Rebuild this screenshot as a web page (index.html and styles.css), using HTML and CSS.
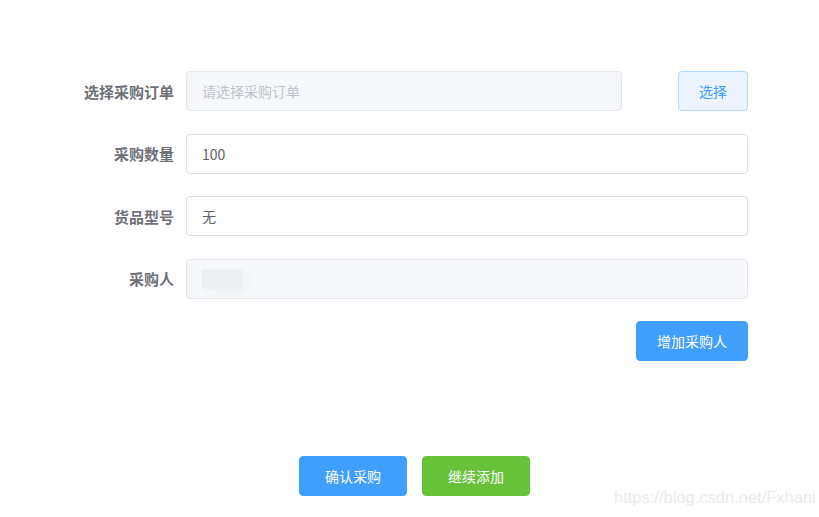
FILE: index.html
```html
<!DOCTYPE html>
<html lang="zh-CN">
<head>
    <meta charset="UTF-8">
    <title>采购</title>
    <link rel="stylesheet" href="styles.css">
</head>
<body>
    <div class="page">
        <form class="purchase-form">
            <div class="form-item">
                <label class="form-label">选择采购订单</label>
                <div class="form-content">
                    <input class="input input-short" type="text" placeholder="请选择采购订单" disabled>
                    <button type="button" class="btn btn-plain">选择</button>
                </div>
            </div>
            <div class="form-item">
                <label class="form-label">采购数量</label>
                <div class="form-content">
                    <input class="input" type="text" value="100">
                </div>
            </div>
            <div class="form-item">
                <label class="form-label">货品型号</label>
                <div class="form-content">
                    <input class="input" type="text" value="无">
                </div>
            </div>
            <div class="form-item">
                <label class="form-label">采购人</label>
                <div class="form-content">
                    <div class="input input-disabled">
                        <span class="blurred-name"></span>
                    </div>
                </div>
            </div>
            <div class="form-item">
                <div class="form-content align-right">
                    <button type="button" class="btn btn-primary btn-wide">增加采购人</button>
                </div>
            </div>
        </form>

        <div class="footer-actions">
            <button type="button" class="btn btn-primary">确认采购</button>
            <button type="button" class="btn btn-success">继续添加</button>
        </div>
    </div>

    <div class="watermark">https://blog.csdn.net/Fxhani</div>
</body>
</html>
```

FILE: styles.css
```css
* {
    margin: 0;
    padding: 0;
    box-sizing: border-box;
}

body {
    background: #fff;
    font-family: "Noto Sans CJK SC", "Liberation Sans", sans-serif;
    font-size: 14px;
    color: #606266;
}

.page {
    width: 819px;
    height: 517px;
    padding-top: 71px;
}

.purchase-form {
    width: 748px;
}

.form-item {
    display: flex;
    align-items: center;
    height: 40px;
    margin-bottom: 22.5px;
}

.form-label {
    width: 186px;
    padding-right: 12px;
    text-align: right;
    font-weight: 600;
    color: #6f7178;
    font-size: 15px;
}

.form-content {
    flex: 1;
    display: flex;
    align-items: center;
    height: 40px;
    margin-left: 186px;
}

.form-label + .form-content {
    margin-left: 0;
}

.align-right {
    justify-content: flex-end;
}

.input {
    width: 100%;
    height: 40px;
    border: 1px solid #dcdfe6;
    border-radius: 4px;
    padding: 0 15px;
    font-family: inherit;
    font-size: 14px;
    color: #606266;
    background: #fff;
    outline: none;
}

.input-short {
    width: 436px;
}

.input:disabled,
.input-disabled {
    background: #f5f7fa;
    border-color: #e4e7ed;
}

.input::placeholder {
    color: #c0c4cc;
}

.input-disabled {
    display: flex;
    align-items: center;
}

.blurred-name {
    display: block;
    width: 40px;
    height: 20px;
    background: #eceef1;
    border-radius: 2px;
    box-shadow: 6px 4px 8px #f0f1f3;
}

.btn {
    height: 40px;
    border-radius: 4px;
    border: 1px solid transparent;
    font-family: inherit;
    font-size: 14px;
    cursor: pointer;
    width: 108px;
}

.btn-plain {
    width: 70px;
    margin-left: auto;
    background: #ecf5ff;
    border-color: #b3d8ff;
    color: #409eff;
}

.btn-primary {
    background: #409eff;
    border-color: #409eff;
    color: #fff;
}

.btn-wide {
    width: 112px;
}

.btn-success {
    background: #67c23a;
    border-color: #67c23a;
    color: #fff;
}

.footer-actions {
    display: flex;
    gap: 15px;
    padding-left: 299px;
    margin-top: 95px;
}

.watermark {
    position: absolute;
    left: 614px;
    top: 488px;
    font-family: "Liberation Sans", sans-serif;
    font-size: 16.5px;
    color: #ebebeb;
}
```
